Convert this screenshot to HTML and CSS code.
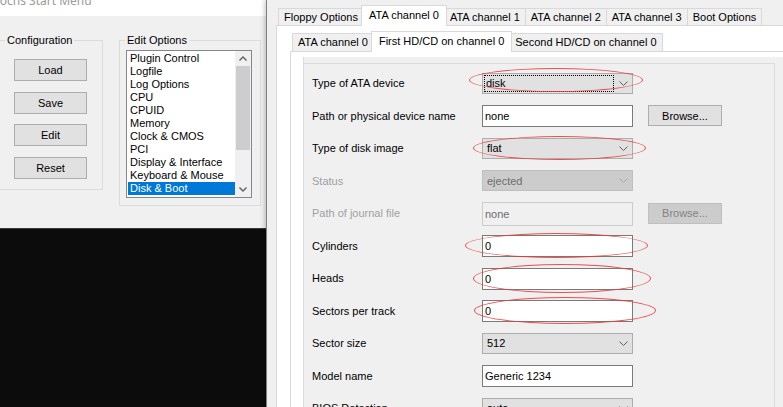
FILE: index.html
```html
<!DOCTYPE html>
<html>
<head>
<meta charset="utf-8">
<title>Bochs configuration</title>
<link rel="stylesheet" href="styles.css">
</head>
<body>
<div class="screen">
  <div class="leftcol">
    <div class="startmenu">
      <div class="titlebar"><span class="title">Bochs Start Menu</span></div>
      <div class="sm-body">
        <div class="group config">
          <span class="group-label">Configuration</span>
          <button class="btn">Load</button>
          <button class="btn">Save</button>
          <button class="btn">Edit</button>
          <button class="btn">Reset</button>
        </div>
        <div class="group editopts">
          <span class="group-label">Edit Options</span>
          <div class="listbox">
            <ul class="items">
              <li>Plugin Control</li>
              <li>Logfile</li>
              <li>Log Options</li>
              <li>CPU</li>
              <li>CPUID</li>
              <li>Memory</li>
              <li>Clock &amp; CMOS</li>
              <li>PCI</li>
              <li>Display &amp; Interface</li>
              <li>Keyboard &amp; Mouse</li>
              <li class="sel">Disk &amp; Boot</li>
            </ul>
            <div class="vscroll">
              <div class="sb-btn"><svg width="8" height="5" viewBox="0 0 8 5"><polyline points="0.5,4.5 4,1 7.5,4.5" fill="none" stroke="#606060" stroke-width="1.4"/></svg></div>
              <div class="sb-thumb"></div>
              <div class="sb-track"></div>
              <div class="sb-btn"><svg width="8" height="5" viewBox="0 0 8 5"><polyline points="0.5,0.5 4,4 7.5,0.5" fill="none" stroke="#606060" stroke-width="1.4"/></svg></div>
            </div>
          </div>
        </div>
      </div>
    </div>
    <div class="console"></div>
  </div>

  <div class="dialog">
    <div class="tabs outer">
      <div class="tabstrip">
        <div class="tab">Floppy Options</div>
        <div class="tab active">ATA channel 0</div>
        <div class="tab">ATA channel 1</div>
        <div class="tab">ATA channel 2</div>
        <div class="tab">ATA channel 3</div>
        <div class="tab">Boot Options</div>
      </div>
      <div class="tabpane">
        <div class="tabs inner">
          <div class="tabstrip">
            <div class="tab">ATA channel 0</div>
            <div class="tab active">First HD/CD on channel 0</div>
            <div class="tab">Second HD/CD on channel 0</div>
          </div>
          <div class="tabpane">
            <div class="scrollarea">
              <div class="form">
                <div class="lbl">Type of ATA device</div>
                <div class="combo focus"><span class="val">disk</span><svg class="chev" width="9" height="5" viewBox="0 0 9 5"><polyline points="0.5,0.5 4.5,4.5 8.5,0.5" fill="none" stroke="#606060" stroke-width="1"/></svg></div>
                <div></div>

                <div class="lbl">Path or physical device name</div>
                <div class="textbox">none</div>
                <button class="btn browse">Browse...</button>

                <div class="lbl">Type of disk image</div>
                <div class="combo"><span class="val">flat</span><svg class="chev" width="9" height="5" viewBox="0 0 9 5"><polyline points="0.5,0.5 4.5,4.5 8.5,0.5" fill="none" stroke="#606060" stroke-width="1"/></svg></div>
                <div></div>

                <div class="lbl disabled">Status</div>
                <div class="combo off"><span class="val">ejected</span><svg class="chev" width="9" height="5" viewBox="0 0 9 5"><polyline points="0.5,0.5 4.5,4.5 8.5,0.5" fill="none" stroke="#a8a8a8" stroke-width="1"/></svg></div>
                <div></div>

                <div class="lbl disabled">Path of journal file</div>
                <div class="textbox off">none</div>
                <button class="btn browse off">Browse...</button>

                <div class="lbl">Cylinders</div>
                <div class="textbox">0</div>
                <div></div>

                <div class="lbl">Heads</div>
                <div class="textbox">0</div>
                <div></div>

                <div class="lbl">Sectors per track</div>
                <div class="textbox">0</div>
                <div></div>

                <div class="lbl">Sector size</div>
                <div class="combo"><span class="val">512</span><svg class="chev" width="9" height="5" viewBox="0 0 9 5"><polyline points="0.5,0.5 4.5,4.5 8.5,0.5" fill="none" stroke="#606060" stroke-width="1"/></svg></div>
                <div></div>

                <div class="lbl">Model name</div>
                <div class="textbox">Generic 1234</div>
                <div></div>

                <div class="lbl">BIOS Detection</div>
                <div class="combo"><span class="val">auto</span><svg class="chev" width="9" height="5" viewBox="0 0 9 5"><polyline points="0.5,0.5 4.5,4.5 8.5,0.5" fill="none" stroke="#606060" stroke-width="1"/></svg></div>
                <div></div>
              </div>
            </div>
          </div>
        </div>
      </div>
    </div>
  </div>

  <div class="mark m1"></div>
  <div class="mark m2"></div>
  <div class="mark m3"></div>
  <div class="mark m4"></div>
  <div class="mark m5"></div>
</div>
</body>
</html>
```

FILE: styles.css
```css
* { box-sizing: border-box; }
html, body { margin: 0; padding: 0; }
body {
  width: 783px;
  height: 407px;
  overflow: hidden;
  background: #f0f0f0;
  color: #000;
  font-family: "Liberation Sans", Arial, sans-serif;
  font-size: 11px;
}
.screen {
  position: relative;
  display: flex;
  width: 783px;
  height: 407px;
  overflow: hidden;
}

/* ---------- left: Bochs Start Menu ---------- */
.leftcol {
  width: 266px;
  flex: none;
  display: flex;
  flex-direction: column;
}
.startmenu {
  height: 228px;
  flex: none;
  display: flex;
  flex-direction: column;
  background: #f0f0f0;
  overflow: hidden;
}
.titlebar {
  height: 16px;
  flex: none;
  background: #fff;
  overflow: hidden;
}
.title {
  display: block;
  margin: -6px 0 0 -8px;
  line-height: 14px;
  font-family: "Noto Sans", "Open Sans", sans-serif;
  font-size: 12px;
  color: #9a9a9a;
  white-space: nowrap;
}
.sm-body {
  flex: 1;
  display: flex;
  align-items: flex-start;
  padding-top: 24px;
}
.group {
  position: relative;
  border: 1px solid #dcdcdc;
  flex: none;
}
.group-label {
  position: absolute;
  top: -7px;
  left: 7px;
  padding: 0 2px;
  line-height: 13px;
  background: #f0f0f0;
  white-space: nowrap;
}
.config {
  margin-left: -3px;
  width: 106px;
  height: 150px;
  padding: 18px 0 0 16px;
  display: flex;
  flex-direction: column;
  gap: 10.5px;
}
.editopts {
  margin-left: 16px;
  width: 142px;
  height: 166px;
  padding: 9px 0 0 6px;
}
.editopts .group-label { left: 5px; }

.btn {
  width: 73px;
  height: 22px;
  padding: 0;
  border: 1px solid #adadad;
  background: #e1e1e1;
  color: #000;
  font: inherit;
  text-align: center;
}

.listbox {
  width: 126px;
  height: 148px;
  border: 1px solid #828790;
  background: #fff;
  display: flex;
}
.items {
  list-style: none;
  margin: 0;
  padding: 1px 0 0 1px;
  flex: 1;
  min-width: 0;
}
.items li {
  height: 13px;
  line-height: 13px;
  padding-left: 2px;
  white-space: nowrap;
  overflow: hidden;
}
.items li.sel {
  background: #0078d7;
  color: #fff;
}
.vscroll {
  width: 16px;
  flex: none;
  display: flex;
  flex-direction: column;
  background: #f0f0f0;
}
.sb-btn {
  height: 15px;
  flex: none;
  display: flex;
  align-items: center;
  justify-content: center;
}
.sb-thumb {
  height: 84px;
  flex: none;
  margin: 0 1px;
  background: #cdcdcd;
}
.sb-track { flex: 1; }

.console {
  flex: 1;
  background: #0c0c0c;
  border-top: 1px solid #3a3a3a;
}

/* ---------- right: configuration dialog ---------- */
.dialog {
  flex: 1;
  min-width: 0;
  position: relative;
  z-index: 1;
  border-left: 1px solid #7f7f7f;
  background: #f0f0f0;
  padding: 5px 0 0 9px;
  box-shadow: -2px 0 4px rgba(0, 0, 0, 0.18);
}
.tabs { display: flex; flex-direction: column; }
.tabstrip {
  display: flex;
  align-items: flex-end;
  height: 20px;
  padding-left: 2px;
  position: relative;
  z-index: 1;
}
.tab {
  height: 17px;
  line-height: 16px;
  padding: 0 5px;
  margin-left: -1px;
  border: 1px solid #d9d9d9;
  border-bottom: none;
  background: #f0f0f0;
  white-space: nowrap;
  flex: none;
}
.tab:first-child { margin-left: 0; }
.tab.active {
  position: relative;
  z-index: 1;
  height: 21px;
  line-height: 19px;
  margin: 0 -2px -1px -3px;
  padding: 0 7px;
  background: #fff;
}
.inner .tab { height: 18px; line-height: 17px; }
.inner .tab.active { height: 21px; line-height: 19px; }
.tabpane {
  flex: 1;
  border-top: 1px solid #d9d9d9;
  border-left: 1px solid #d9d9d9;
  background: #fff;
}
.inner {
  margin-left: 13px;
  padding-top: 5px;
}
.scrollarea {
  margin: 5px 0 0 12px;
  padding-top: 6px;
  border-left: 1px solid #dcdcdc;
  background: #f0f0f0;
}
.form {
  width: 471px;
  min-height: 360px;
  border-top: 1px solid #dcdcdc;
  border-right: 1px solid #dcdcdc;
  padding: 3px 0 0 8px;
  display: grid;
  grid-template-columns: 170px 151px 89px;
  grid-auto-rows: 32.5px;
  align-items: center;
}
.lbl { white-space: nowrap; }
.lbl.disabled { color: #a0a0a0; }

.combo {
  height: 21px;
  display: flex;
  align-items: center;
  border: 1px solid #adadad;
  background: #e1e1e1;
  padding: 0 4px 0 4px;
}
.combo .val { flex: 1; }
.combo .chev { flex: none; display: block; }
.combo.focus { padding-left: 1px; }
.combo.focus .val {
  align-self: stretch;
  display: flex;
  align-items: center;
  margin: 1px 5px 1px 0;
  padding-left: 1px;
  border: 1px dotted #000;
}
.combo.off {
  background: #cccccc;
  border-color: #bfbfbf;
  color: #6d6d6d;
}

.textbox {
  height: 22px;
  margin-top: 1px;
  line-height: 20px;
  padding-left: 2px;
  border: 1px solid #7a7a7a;
  background: #fff;
  white-space: nowrap;
}
.textbox.off {
  height: 24px;
  line-height: 22px;
  border-color: #cccccc;
  background: #f0f0f0;
  color: #6d6d6d;
}
.browse {
  width: 74px;
  height: 21px;
  margin-left: 15px;
}
.browse.off {
  background: #cccccc;
  border-color: #bfbfbf;
  color: #838383;
}

/* ---------- red annotation ellipses ---------- */
.mark {
  position: absolute;
  border: 1.5px solid rgba(236, 50, 50, 0.85);
  border-radius: 50%;
  pointer-events: none;
  z-index: 5;
}
.m1 { left: 469px; top: 68px;  width: 174px; height: 24px; }
.m2 { left: 473px; top: 136px; width: 173px; height: 24px; }
.m3 { left: 465px; top: 233px; width: 183px; height: 25px; }
.m4 { left: 473px; top: 264px; width: 178px; height: 29px; }
.m5 { left: 474px; top: 297px; width: 182px; height: 27px; }
```
